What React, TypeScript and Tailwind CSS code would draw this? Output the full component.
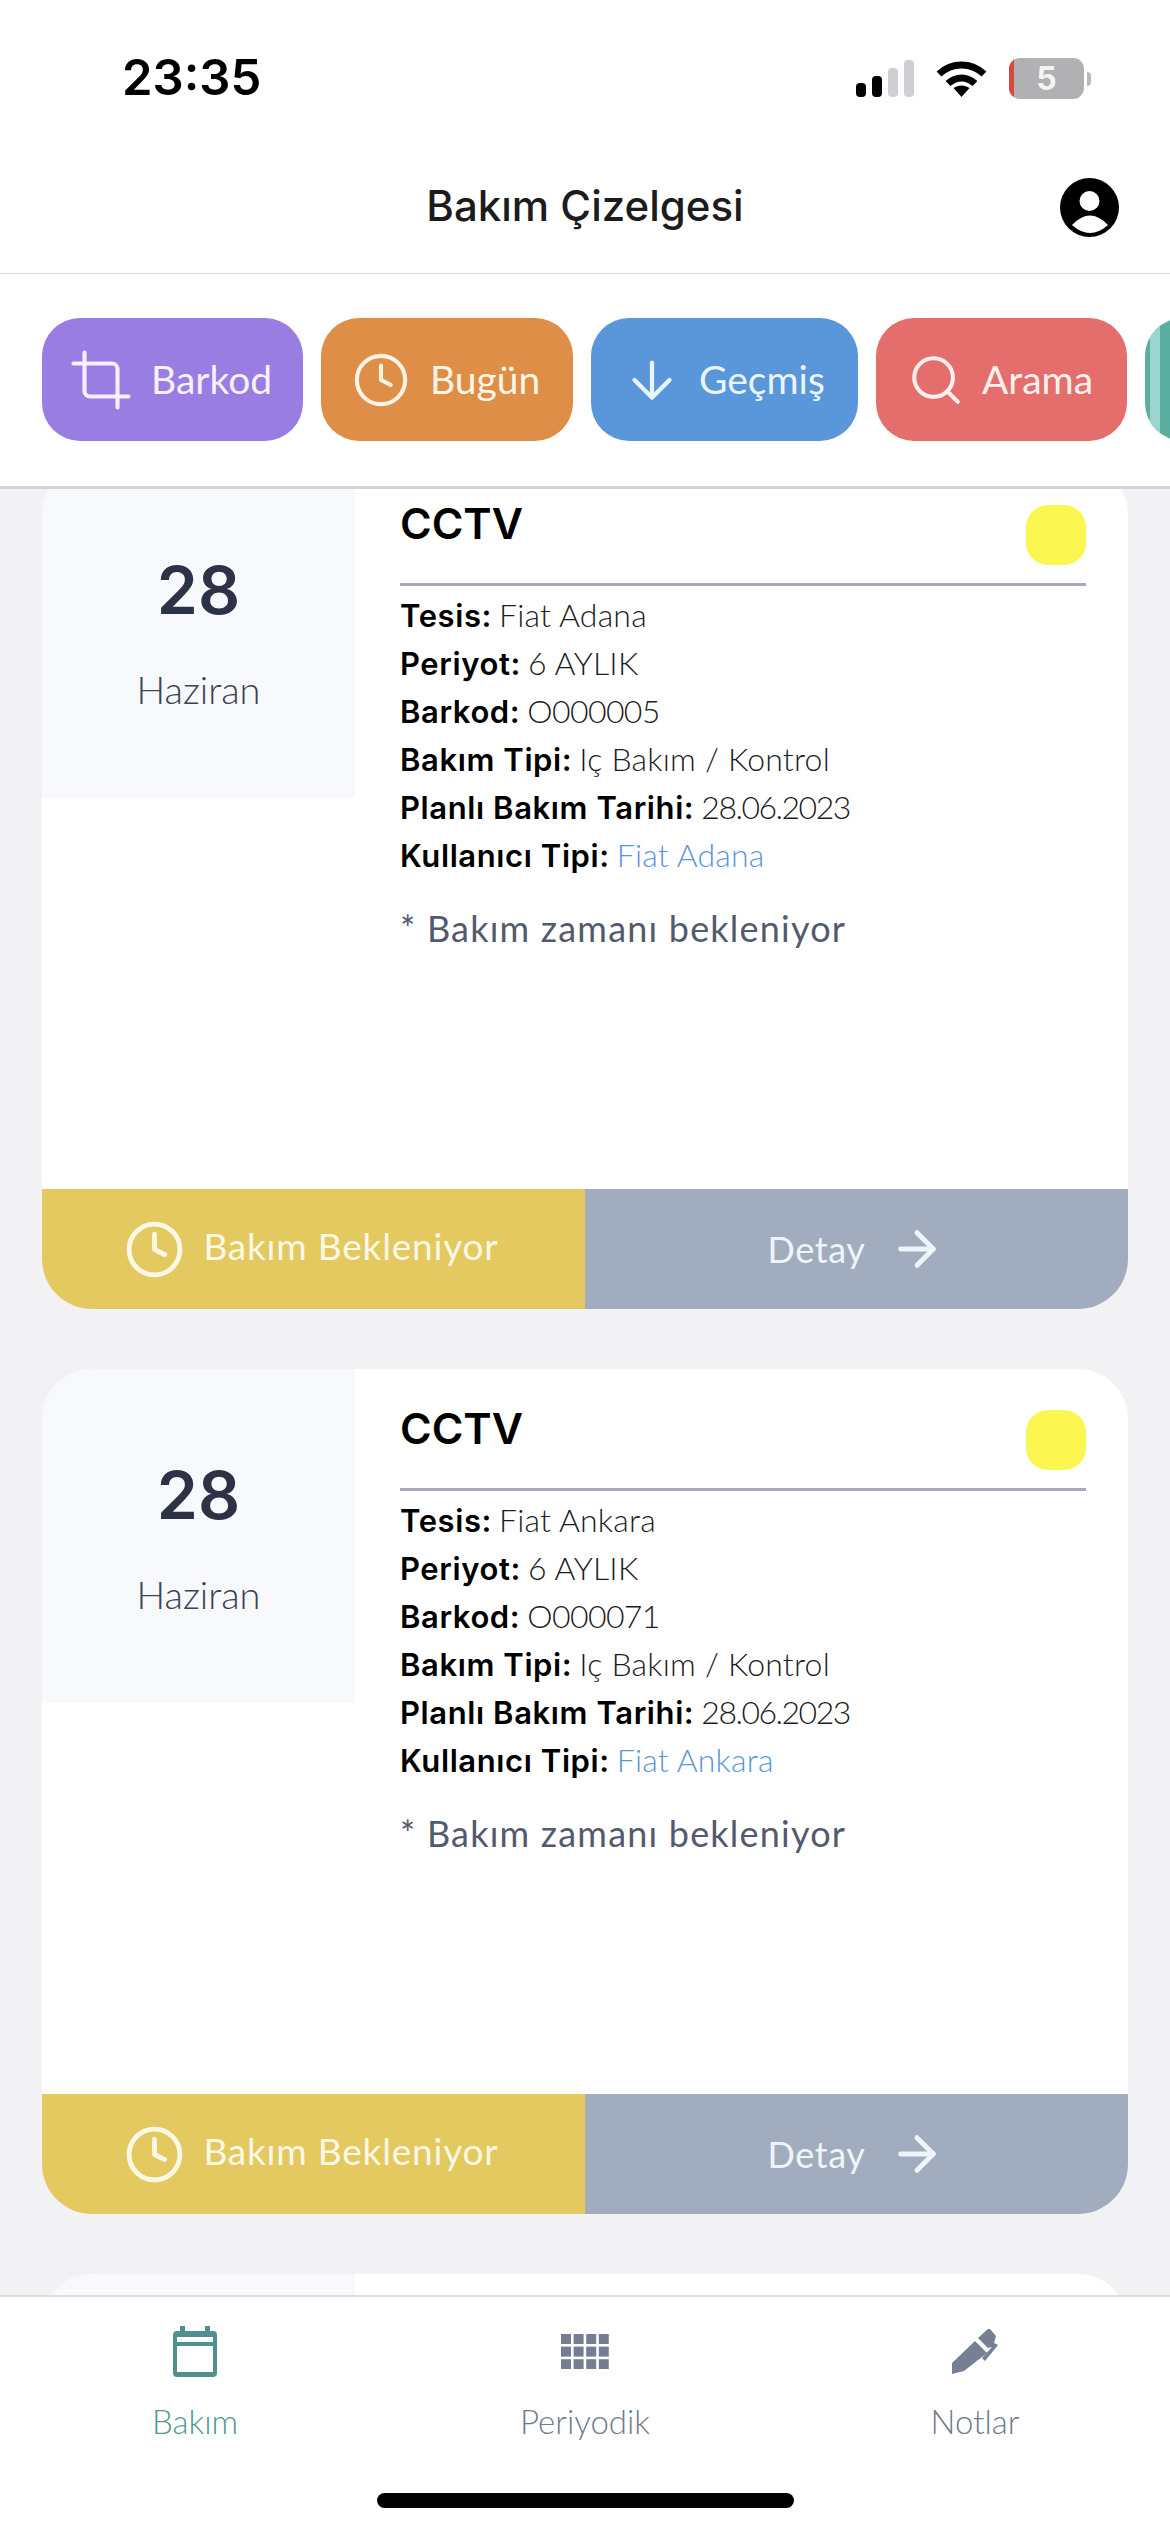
import { ArrowDown, ArrowRight, Clock, Crop, Search } from "lucide-react";

const sans = "font-['Lato',sans-serif]";
const strong = "font-['Inter',sans-serif]";

const tools = [
  { label: "Barkod", Icon: Crop, bg: "bg-[#9a7de2]", w: "w-[261px]", pad: "pl-[26px]", gap: "gap-[17px]", size: 66, color: "text-[#f6effc]" },
  { label: "Bugün", Icon: Clock, bg: "bg-[#de8e47]", w: "w-[252px]", pad: "pl-[31px]", gap: "gap-[20px]", size: 58, color: "text-[#fdf4e6]" },
  { label: "Geçmiş", Icon: ArrowDown, bg: "bg-[#5a96da]", w: "w-[267px]", pad: "pl-[31px]", gap: "gap-[17px]", size: 60, color: "text-[#e8f5fd]" },
  { label: "Arama", Icon: Search, bg: "bg-[#e36e6b]", w: "w-[251px]", pad: "pl-[31px]", gap: "gap-[17px]", size: 58, color: "text-[#fff0ee]" },
];

const cards = [
  { site: "Fiat Adana", code: "O000005" },
  { site: "Fiat Ankara", code: "O000071" },
];

function Signal() {
  return (
    <svg width="58" height="37" viewBox="0 0 58 37">
      <rect x="0" y="23" width="10" height="14" rx="4" fill="#000" />
      <rect x="16" y="16" width="10" height="21" rx="4" fill="#000" />
      <rect x="32" y="8" width="10" height="29" rx="4" fill="#cfcfd3" />
      <rect x="48" y="0" width="10" height="37" rx="4" fill="#cfcfd3" />
    </svg>
  );
}

function Wifi() {
  return (
    <svg width="51" height="37" viewBox="0 0 51 37" fill="none">
      <path d="M3 14 C16 2 35 2 48 14" stroke="#000" strokeWidth="7" />
      <path d="M12 23.5 C20 16 31 16 39 23.5" stroke="#000" strokeWidth="7" />
      <path d="M17.5 28 C22 24.5 29 24.5 33.5 28 L25.5 37 Z" fill="#000" />
    </svg>
  );
}

function Battery() {
  return (
    <div className="flex items-center gap-[3px]">
      <div className="relative flex h-[41px] w-[75px] items-center justify-center overflow-hidden rounded-[11px] bg-[#b1b0b3]">
        <span className="absolute inset-y-0 left-0 w-[5px] bg-[#d8493c]" />
        <span className="font-['Inter',sans-serif] text-[32px] font-bold leading-none text-[#f4f4f5]">5</span>
      </div>
      <span className="h-[14px] w-[4px] rounded-r-full bg-[#b9b8bb]" />
    </div>
  );
}

function Avatar() {
  return (
    <svg width="59" height="59" viewBox="0 0 59 59">
      <circle cx="29.5" cy="29.5" r="29.5" fill="#000" />
      <circle cx="29.5" cy="23" r="10" fill="#fff" />
      <path d="M12 47 Q30 28 48 47 Q30 63 12 47 Z" fill="#fff" />
    </svg>
  );
}

function CalendarIcon() {
  return (
    <svg width="44" height="51" viewBox="22 15 44 51">
      <path
        fill="#50918f"
        fillRule="evenodd"
        d="M29 15h5v5h20v-5h5v5h3a4 4 0 0 1 4 4v38a4 4 0 0 1-4 4H26a4 4 0 0 1-4-4V24a4 4 0 0 1 4-4h3zM26 26v5h36v-5zM26 35v26h36V35z"
      />
    </svg>
  );
}

function GridIcon() {
  const cells: [number, number][] = [];
  for (let r = 0; r < 3; r++) for (let c = 0; c < 4; c++) cells.push([c * 12.6, r * 12.6]);
  return (
    <svg width="48" height="35" viewBox="0 0 48 35">
      {cells.map(([x, y]) => (
        <rect key={`${x}-${y}`} x={x} y={y} width="10" height="10" fill="#767d92" />
      ))}
    </svg>
  );
}

function PenIcon() {
  return (
    <svg width="50" height="48" viewBox="20 16 50 48">
      <path fill="#767f94" d="M22 52 45 30 57 42 34 60 22 63Z" />
      <path fill="#767f94" d="M48 27 58 18 60 18 66 25 64 32 68 34 55 50 52 47 62 36 58 37Z" />
    </svg>
  );
}

function Row({ label, children }: { label: string; children: React.ReactNode }) {
  return (
    <div className={`${sans} h-[48px] text-[32px] leading-[48px] font-light tracking-[0.2px] text-[#1c1c22]`}>
      <span className={`${strong} mr-[7px] text-[31px] font-semibold tracking-[0.6px] text-black`}>{label}</span>
      {children}
    </div>
  );
}

function Tab({ label, active, children }: { label: string; active?: boolean; children: React.ReactNode }) {
  return (
    <div className="flex w-[390px] flex-col items-center pt-[24px]">
      <div className="flex h-[60px] items-center">{children}</div>
      <span className={`${sans} mt-[22px] text-[33px] leading-[36px] font-light ${active ? "text-[#4f9a8e]" : "text-[#73798c]"}`}>{label}</span>
    </div>
  );
}

function Card({ site, code }: { site: string; code: string }) {
  return (
    <div className="flex h-[845px] shrink-0 flex-col overflow-hidden rounded-[50px] bg-white">
      <div className="flex flex-1">
        <div className="flex h-[334px] w-[313px] shrink-0 flex-col items-center bg-[#f8f9fd] pt-[86px]">
          <span className={`${strong} text-[66px] leading-[80px] font-semibold text-[#2d3247]`}>28</span>
          <span className={`${sans} mt-[35px] text-[38px] leading-[48px] font-light text-[#3c4154]`}>Haziran</span>
        </div>
        <div className="flex-1 pt-[41px] pr-[42px] pl-[45px]">
          <div className="flex h-[60px] items-start justify-between">
            <span className={`${strong} text-[43px] leading-[36px] font-semibold text-black`}>CCTV</span>
            <span className="h-[60px] w-[60px] rounded-[22px] bg-[#fcf650]" />
          </div>
          <div className="mt-[18px] mb-[5px] h-[3px] bg-[#a9a9bd]" />
          <Row label="Tesis:">{site}</Row>
          <Row label="Periyot:">6 AYLIK</Row>
          <Row label="Barkod:">
            <span className="tracking-[-0.6px]">{code}</span>
          </Row>
          <Row label="Bakım Tipi:">Iç Bakım / Kontrol</Row>
          <Row label="Planlı Bakım Tarihi:">
            <span className="tracking-[-1.5px]">28.06.2023</span>
          </Row>
          <Row label="Kullanıcı Tipi:">
            <span className="text-[#5a96da]">{site}</span>
          </Row>
          <p className={`${sans} mt-[25px] text-[36px] leading-[48px] tracking-[1.2px] text-[#545a6d]`}>* Bakım zamanı bekleniyor</p>
        </div>
      </div>
      <div className="flex h-[120px]">
        <div className="flex w-1/2 items-center justify-center gap-[18px] bg-[#e3c960] pr-[4px] text-[#fdf8e6]">
          <Clock size={61} strokeWidth={1.9} />
          <span className={`${sans} -mt-[6px] text-[37px] tracking-[0.8px]`}>Bakım Bekleniyor</span>
        </div>
        <div className="flex w-1/2 items-center justify-center gap-[24px] bg-[#a1adbf] text-[#eef4f9]">
          <span className={`${sans} text-[36px] tracking-[0.6px]`}>Detay</span>
          <ArrowRight size={56} strokeWidth={2.1} />
        </div>
      </div>
    </div>
  );
}

export default function App() {
  return (
    <div className="flex h-[2532px] w-[1170px] flex-col overflow-hidden bg-[#f2f2f4]">
      {/* status bar + title */}
      <div className="h-[274px] shrink-0 border-b border-[#dcdce0] bg-white">
        <div className="flex h-[146px] items-start justify-between pt-[50px] pr-[79px] pl-[122px]">
          <span className={`${strong} text-[49px] leading-[56px] font-semibold text-black`}>23:35</span>
          <div className="flex items-center gap-[22px] pt-[8px]">
            <Signal />
            <Wifi />
            <Battery />
          </div>
        </div>
        <div className="relative flex items-center justify-center pt-[30px]">
          <span className={`${strong} text-[42px] leading-[60px] font-medium text-[#1c1c1e]`}>Bakım Çizelgesi</span>
          <div className="absolute top-[32px] right-[51px]">
            <Avatar />
          </div>
        </div>
      </div>

      <div className="flex h-[215px] shrink-0 gap-[18px] overflow-hidden border-b-[3px] border-[#d2d2de] bg-white pt-[44px] pl-[42px]">
        {tools.map(({ label, Icon, bg, w, pad, gap, size, color }) => (
          <div key={label} className={`flex h-[123px] shrink-0 items-center rounded-[38px] ${bg} ${w} ${pad} ${gap} ${color}`}>
            <Icon size={size} strokeWidth={label === "Barkod" ? 1.5 : 1.7} />
            <span className={`${sans} text-[39px]`}>{label}</span>
          </div>
        ))}
        <div className="flex h-[123px] w-[120px] shrink-0 overflow-hidden rounded-[38px] bg-[#5aae9f] pl-[5px]">
          <span className="h-full w-[10px] bg-[#9ad5cf]" />
        </div>
      </div>

      {/* card list, scrolled a little past the top of the first card */}
      <div className="flex min-h-0 flex-1 flex-col overflow-hidden px-[42px]">
        <div className="-mt-[25px] flex flex-col gap-[60px]">
          {cards.map((c) => (
            <Card key={c.code} {...c} />
          ))}
          <div className="h-[80px] overflow-hidden rounded-t-[50px] bg-white">
            <div className="h-full w-[313px] bg-[#f8f9fd]" />
          </div>
        </div>
      </div>

      {/* bottom tabs */}
      <div className="relative flex h-[237px] shrink-0 border-t-2 border-[#dedee2] bg-white">
        <Tab label="Bakım" active>
          <CalendarIcon />
        </Tab>
        <Tab label="Periyodik">
          <GridIcon />
        </Tab>
        <Tab label="Notlar">
          <PenIcon />
        </Tab>
        <span className="absolute bottom-[24px] left-[377px] h-[15px] w-[417px] rounded-full bg-black" />
      </div>
    </div>
  );
}
